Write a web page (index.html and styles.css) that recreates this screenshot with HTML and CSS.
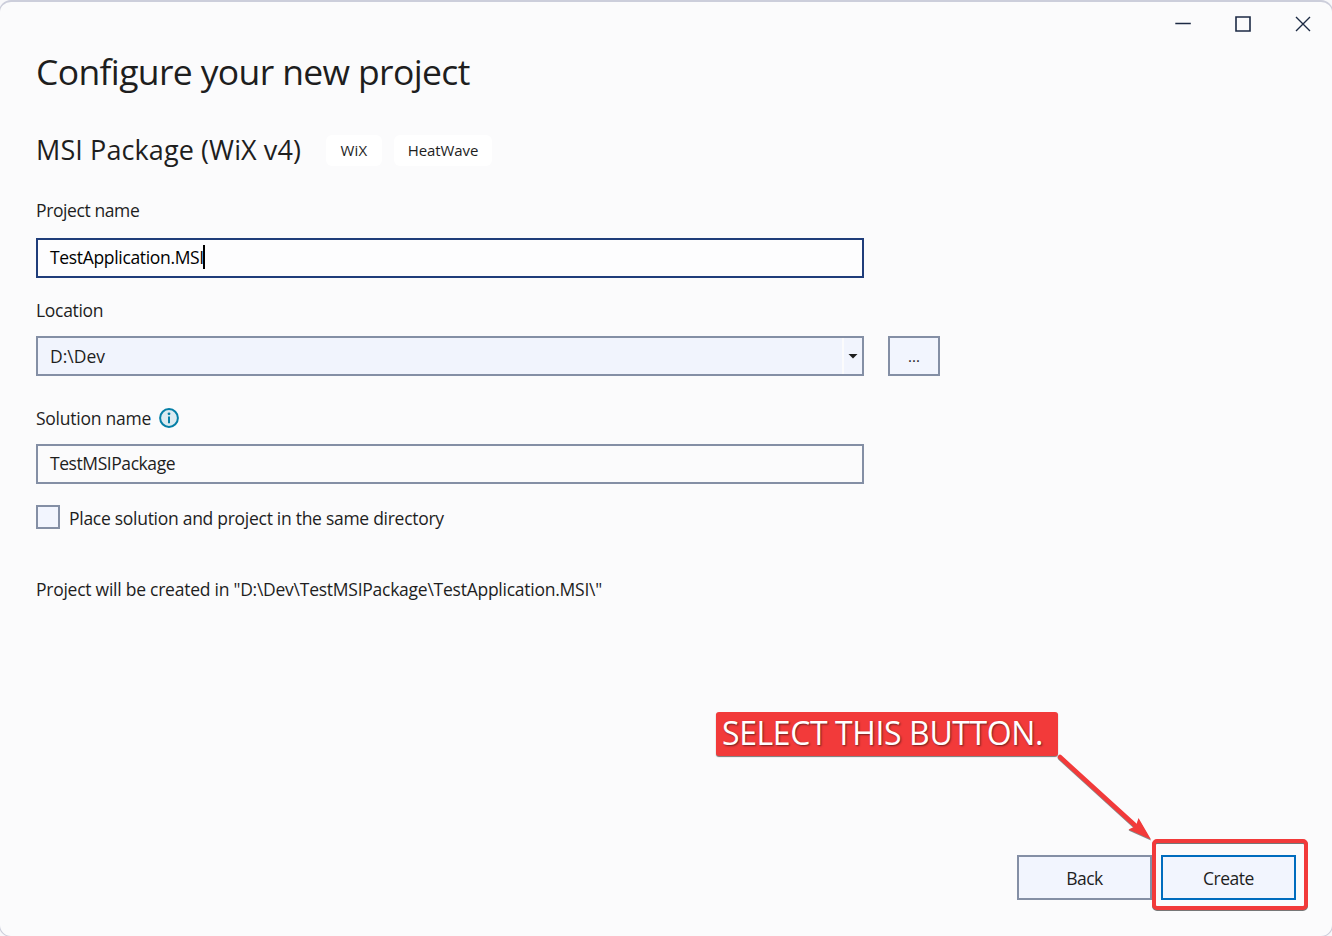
FILE: index.html
```html
<!DOCTYPE html>
<html lang="en">
<head>
<meta charset="utf-8">
<title>Configure your new project</title>
<link rel="stylesheet" href="styles.css">
</head>
<body>
<div class="window">
  <header class="titlebar">
    <svg class="caption-icon" viewBox="0 0 20 20"><path d="M2.3 9.5h15.5" stroke-width="1.6"/></svg>
    <svg class="caption-icon" viewBox="0 0 20 20"><path d="M3 3h14v14H3z" stroke-width="1.6"/></svg>
    <svg class="caption-icon" viewBox="0 0 20 20"><path d="M3 3l14 14M17 3L3 17" stroke-width="1.4"/></svg>
  </header>
  <main class="content">
    <h1 class="title"><span>Configure your new project</span></h1>
    <div class="template">
      <h2 class="template-name"><span>MSI Package (WiX v4)</span></h2>
      <span class="tag tag-wix"><span>WiX</span></span>
      <span class="tag tag-heat"><span>HeatWave</span></span>
    </div>
    <div class="label label-project"><span>Project name</span></div>
    <div class="field focused"><span class="value-project">TestApplication.MSI</span><i class="caret"></i></div>
    <div class="label label-location"><span>Location</span></div>
    <div class="location-row">
      <div class="field combo"><span class="value-location">D:\Dev</span>
        <span class="drop"><svg width="10" height="6" viewBox="0 0 10 6"><path d="M.5 1h9L5 5.500z" fill="#1e1e1e"/></svg></span>
      </div>
      <button class="button browse">...</button>
    </div>
    <div class="label label-solution"><span>Solution name</span>
      <svg class="info" viewBox="0 0 20 20"><circle cx="10" cy="10" r="8.9" fill="#dcebf1" stroke="#057fa6" stroke-width="2"/><circle cx="10" cy="5.8" r="1.4" fill="#057fa6"/><path d="M10 8.500v6.700" stroke="#057fa6" stroke-width="2"/></svg>
    </div>
    <div class="field"><span class="value-solution">TestMSIPackage</span></div>
    <div class="check-row"><i class="checkbox"></i><span class="check-text">Place solution and project in the same directory</span></div>
    <p class="summary"><span>Project will be created in "D:\Dev\TestMSIPackage\TestApplication.MSI\"</span></p>
  </main>
  <footer class="actions">
    <button class="button back"><span>Back</span></button>
    <button class="button create"><span>Create</span></button>
  </footer>
  <div class="callout"><span>SELECT THIS BUTTON.</span></div>
  <svg class="arrow" width="110" height="100" viewBox="1050 750 110 100">
    <g fill="#f23a3a"><path d="M1060 757l78 71" stroke="#f23a3a" stroke-width="4.500" stroke-linecap="round"/><path d="M1151 839.5l-12.500-21.500-2.500 8-7.500 3.500z"/></g>
  </svg>
  <div class="highlight"></div>
</div>
</body>
</html>
```
FILE: styles.css
```css
* { box-sizing: border-box; }
html, body { margin: 0; height: 100%; overflow: hidden; background: #f8f8fa; }
body { font-family: "Open Sans", "Noto Sans", sans-serif; font-size: 17.5px; color: #1e1e1e; }
.window {
  position: relative; width: 1334px; height: 937px; margin-left: -1px; overflow: hidden;
  display: flex; flex-direction: column; background: #fbfbfc;
  border: solid #cccedb; border-width: 2px 1px 1px; border-radius: 12px;
}
.titlebar { display: flex; justify-content: flex-end; align-items: center; gap: 40px; height: 44px; padding-right: 19px; }
.caption-icon { width: 20px; height: 20px; fill: none; stroke: #1c2a44; }
.content { flex: 1; padding: 0 36px; }
h1, h2, p { margin: 0; font-weight: 400; }
.title { height: 52px; line-height: 50px; font-size: 35.5px; letter-spacing: -.64px; white-space: nowrap; }
.template { display: flex; align-items: center; height: 60px; margin-top: 22px; white-space: nowrap; }
.template-name { width: 290px; font-size: 27px; line-height: 40px; letter-spacing: .1px; }
.tag { display: flex; align-items: center; justify-content: center; height: 31px; border-radius: 6px; background: #fff; font-size: 15px; }
.tag-wix { width: 56px; margin-right: 12px; letter-spacing: .2px; }
.tag-heat { width: 98px; letter-spacing: -.1px; }
.label { display: flex; align-items: center; height: 24px; white-space: nowrap; }
.label-project { margin: 18px 0 16px; letter-spacing: -.4px; }
.label-location { margin: 20px 0 14px; letter-spacing: -.3px; }
.label-solution { margin: 30px 0 14px; letter-spacing: -.25px; }
.field { display: flex; align-items: center; width: 828px; height: 40px; padding-left: 12px; border: 2px solid #848fa5; background: #fbfbfc; white-space: nowrap; }
.focused { border-color: #1f3d7a; background: #fdfdfe; color: #000; }
.value-project { padding-bottom: 2px; letter-spacing: -.33px; }
.value-solution { padding-bottom: 2px; letter-spacing: -.43px; }
.caret { width: 2px; height: 24px; margin: 0 0 2px -1px; background: #000; }
.location-row { display: flex; gap: 24px; }
.combo { background: #f1f4fd; }
.drop { display: flex; align-items: center; justify-content: center; width: 20px; height: 36px; margin-left: auto; padding-right: 1px; border-left: 2px solid #fbfbfc; }
.button { display: flex; align-items: center; justify-content: center; padding: 0; border: 2px solid #848fa5; background: #f2f5fe; color: #1e1e1e; font: inherit; }
.browse { width: 52px; height: 40px; font-size: 15px; }
.info { width: 20px; height: 20px; margin-left: 8px; }
.check-row { display: flex; align-items: center; height: 24px; margin-top: 21px; white-space: nowrap; }
.checkbox { width: 24px; height: 24px; margin-right: 9px; border: 2px solid #848fa5; background: #f2f5fe; }
.check-text { padding-top: 2px; letter-spacing: -.28px; }
.summary { height: 24px; margin-top: 48px; line-height: 24px; letter-spacing: -.25px; white-space: nowrap; }
.actions { display: flex; justify-content: flex-end; gap: 9px; padding: 0 36px 36px; }
.actions .button { width: 135px; height: 45px; letter-spacing: -.5px; }
.actions .create { border-color: #006cbe; }
.callout { position: absolute; left: 716px; top: 710px; width: 342px; height: 44px; padding-left: 6px; border-radius: 3px; background: #f23a3a; box-shadow: 0 1px 1px #777; color: #fff; font-size: 32px; line-height: 41px; letter-spacing: -.4px; white-space: nowrap; text-shadow: 1px 1px 2px #702020; }
.arrow { position: absolute; left: 1050px; top: 748px; filter: drop-shadow(0 1px .5px #888); }
.highlight { position: absolute; left: 1152px; top: 837px; width: 156px; height: 71px; border: 4px solid #f23a3a; border-radius: 5px; filter: drop-shadow(0 1px .5px #777); }
```
